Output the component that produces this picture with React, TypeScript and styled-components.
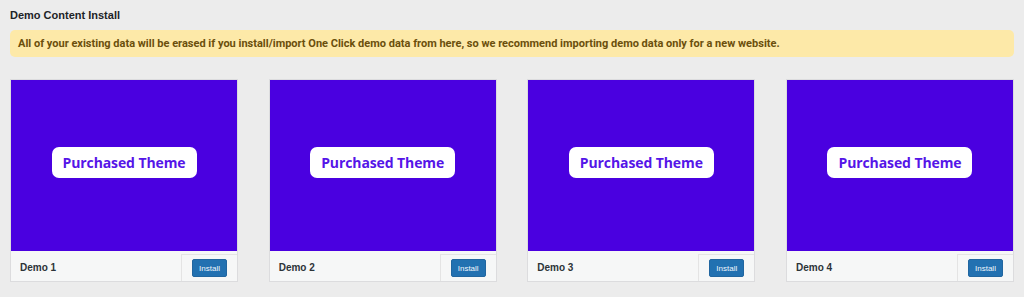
import styled, { createGlobalStyle } from 'styled-components'

const GlobalStyle = createGlobalStyle`
  html, body {
    margin: 0;
    padding: 0;
    background: #ececec;
  }
  body {
    font-family: "Liberation Sans", Arial, sans-serif;
    color: #1d2327;
  }
`

const Page = styled.div`
  padding: 8px 10px 0 10px;
  width: 1004px;
  box-sizing: content-box;
`

const Title = styled.h2`
  margin: 0;
  font-size: 11px;
  line-height: 14px;
  font-weight: 700;
  color: #1d2327;
`

const Notice = styled.div`
  margin-top: 8px;
  height: 27px;
  display: flex;
  align-items: center;
  padding: 0 8px;
  border-radius: 5px;
  background: #fde9a8;
  color: #6b4f0c;
  font-family: Roboto, "Liberation Sans", sans-serif;
  font-size: 11px;
  font-weight: 700;
`

const Grid = styled.div`
  margin-top: 22px;
  display: grid;
  grid-template-columns: repeat(4, 228px);
  column-gap: 30.67px;
`

const Card = styled.div`
  border: 1px solid #dcdcde;
  background: #f6f7f7;
  display: flex;
  flex-direction: column;
  box-sizing: border-box;
  height: 203px;
`

const Preview = styled.div`
  height: 171px;
  background: #4a00e0;
  display: flex;
  align-items: center;
  justify-content: center;
`

const Badge = styled.div`
  width: 145px;
  height: 31px;
  margin-bottom: 6px;
  border-radius: 7px;
  background: #ffffff;
  color: #5515e8;
  font-family: "Open Sans", "Noto Sans", sans-serif;
  font-weight: 700;
  font-size: 14px;
  display: flex;
  align-items: center;
  justify-content: center;
  letter-spacing: -0.1px;
`

const Footer = styled.div`
  flex: 1;
  display: flex;
  align-items: stretch;
  justify-content: space-between;
`

const Name = styled.div`
  padding-left: 9px;
  padding-top: 2px;
  display: flex;
  align-items: center;
  font-size: 10px;
  font-weight: 700;
  color: #2c3338;
`

const Actions = styled.div`
  margin-top: 3px;
  width: 55px;
  border-left: 1px solid #e4e4e4;
  border-top: 1px solid #e4e4e4;
  display: flex;
  align-items: center;
  justify-content: center;
`

const InstallButton = styled.button`
  width: 35px;
  height: 18px;
  padding: 0;
  border: 1px solid #2166a0;
  border-radius: 2px;
  background: #2271b1;
  color: #f0f6fc;
  font-family: "Liberation Sans", Arial, sans-serif;
  font-size: 8px;
  cursor: pointer;
`

const demos = ['Demo 1', 'Demo 2', 'Demo 3', 'Demo 4']

export default function App() {
  return (
    <>
      <GlobalStyle />
      <Page>
        <Title>Demo Content Install</Title>
        <Notice>
          All of your existing data will be erased if you install/import One Click demo data from here, so we
          recommend importing demo data only for a new website.
        </Notice>
        <Grid>
          {demos.map((demo) => (
            <Card key={demo}>
              <Preview>
                <Badge>Purchased Theme</Badge>
              </Preview>
              <Footer>
                <Name>{demo}</Name>
                <Actions>
                  <InstallButton>Install</InstallButton>
                </Actions>
              </Footer>
            </Card>
          ))}
        </Grid>
      </Page>
    </>
  )
}
